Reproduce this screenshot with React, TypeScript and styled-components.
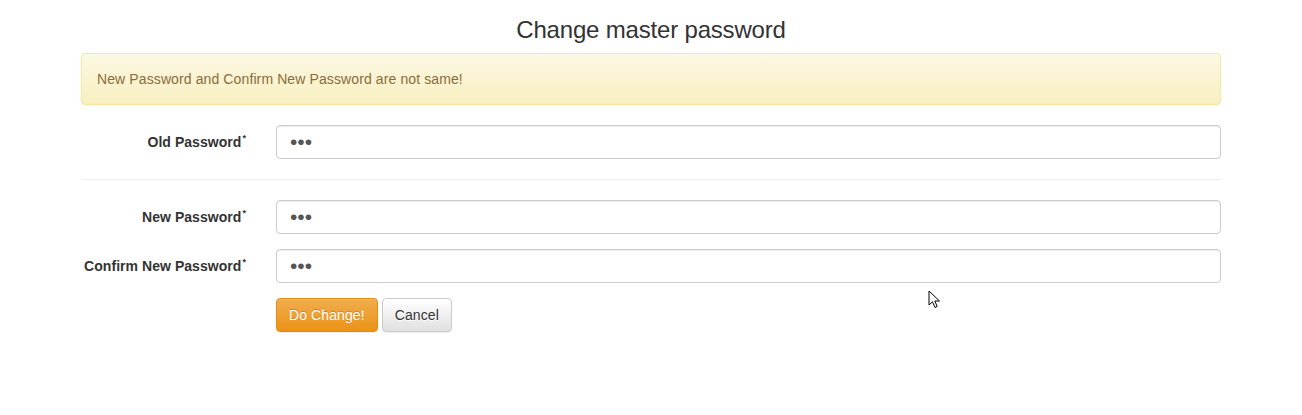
import React from "react";
import styled, { createGlobalStyle } from "styled-components";

const Global = createGlobalStyle`
  html, body { margin: 0; padding: 0; background: #fff; }
  body {
    font-family: "Liberation Sans", Arial, Helvetica, sans-serif;
    font-size: 14px;
    line-height: 1.42857;
    color: #333;
  }
  * { box-sizing: border-box; }
`;

const Page = styled.div`
  position: relative;
  padding-top: 1px;
`;

const Container = styled.div`
  width: 1170px;
  margin: 0 auto;
  padding: 0 15px;
`;

const Title = styled.h3`
  margin: 16px 0 10px;
  font-size: 24px;
  font-weight: 400;
  line-height: 26px;
  text-align: center;
  color: #333;
  letter-spacing: -0.18px;
`;

const Alert = styled.div`
  padding: 15px;
  margin-bottom: 20px;
  border: 1px solid #f5e79e;
  border-radius: 4px;
  color: #8a6d3b;
  background: linear-gradient(to bottom, #fcf8e3 0%, #f8efc0 100%);
  box-shadow: inset 0 1px 0 rgba(255, 255, 255, 0.25), 0 1px 2px rgba(0, 0, 0, 0.05);
  line-height: 20px;
  letter-spacing: 0.11px;
`;

const Form = styled.form`
  margin: 0;
`;

const Group = styled.div`
  display: grid;
  grid-template-columns: 195px 975px;
  margin: 0 -15px 15px;
`;

const Label = styled.label`
  padding: 7px 15px 0;
  text-align: right;
  font-weight: 700;
  line-height: 20px;
  color: #333;
  letter-spacing: 0.05px;
`;

const Req = styled.sup`
  font-size: 9px;
  position: relative;
  top: -6px;
  margin-left: 1px;
  vertical-align: baseline;
  line-height: 0;
`;

const Field = styled.div`
  padding: 0 15px;
  display: flex;
  gap: 4px;
`;

const Input = styled.input`
  display: block;
  width: 100%;
  height: 34px;
  padding: 0 12px 0 13px;
  font-family: "Liberation Sans", Arial, sans-serif;
  font-size: 21px;
  color: #555;
  background: #fff;
  border: 1px solid #ccc;
  border-radius: 4px;
  box-shadow: inset 0 1px 1px rgba(0, 0, 0, 0.075);
  outline: none;
`;

const Divider = styled.hr`
  margin: 20px 0;
  border: 0;
  border-top: 1px solid #eee;
`;

const Button = styled.button<{ $variant: "warning" | "default" }>`
  height: 34px;
  padding: 6px 12px;
  font-family: "Liberation Sans", Arial, sans-serif;
  font-size: 14px;
  line-height: 20px;
  border-radius: 4px;
  cursor: pointer;
  letter-spacing: 0.1px;
  ${(p) =>
    p.$variant === "warning"
      ? `
    color: #fff;
    background: linear-gradient(to bottom, #f0ad4e 0%, #eb9316 100%);
    border: 1px solid #e38d13;
    text-shadow: 0 -1px 0 rgba(0,0,0,.2);
    box-shadow: inset 0 1px 0 rgba(255,255,255,.15), 0 1px 1px rgba(0,0,0,.075);
  `
      : `
    color: #333;
    background: linear-gradient(to bottom, #fff 0%, #e0e0e0 100%);
    border: 1px solid #ccc;
    text-shadow: 0 1px 0 #fff;
    box-shadow: inset 0 1px 0 rgba(255,255,255,.15), 0 1px 1px rgba(0,0,0,.075);
  `}
`;

const Cursor = styled.svg`
  position: absolute;
  left: 928px;
  top: 290px;
  width: 14px;
  height: 20px;
`;

const rows1 = [{ label: "Old Password" }];
const rows2 = [{ label: "New Password" }, { label: "Confirm New Password" }];

export default function App() {
  return (
    <Page>
      <Global />
      <Container>
        <Title>Change master password</Title>
        <Alert>New Password and Confirm New Password are not same!</Alert>
        <Form onSubmit={(e) => e.preventDefault()}>
          {rows1.map((r) => (
            <Group key={r.label}>
              <Label>
                {r.label}
                <Req>*</Req>
              </Label>
              <Field>
                <Input type="password" defaultValue="abc" readOnly />
              </Field>
            </Group>
          ))}
          <Divider />
          {rows2.map((r) => (
            <Group key={r.label}>
              <Label>
                {r.label}
                <Req>*</Req>
              </Label>
              <Field>
                <Input type="password" defaultValue="abc" readOnly />
              </Field>
            </Group>
          ))}
          <Group>
            <div />
            <Field>
              <Button $variant="warning" type="button">Do Change!</Button>
              <Button $variant="default" type="button">Cancel</Button>
            </Field>
          </Group>
        </Form>
      </Container>
      <Cursor viewBox="0 0 14 20">
        <path
          d="M1 1 L1 15 L4.5 11.8 L7 17.5 L9.2 16.5 L6.8 11 L11.5 11 Z"
          fill="#fff"
          stroke="#000"
          strokeWidth="1"
          strokeLinejoin="miter"
        />
      </Cursor>
    </Page>
  );
}
